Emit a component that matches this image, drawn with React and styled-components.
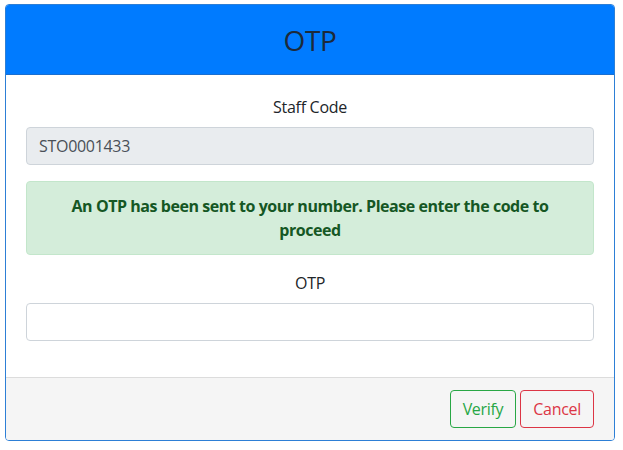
import React from 'react';
import styled, { createGlobalStyle } from 'styled-components';

const GlobalStyle = createGlobalStyle`
  body {
    margin: 0;
    background: #ffffff;
    font-family: "Segoe UI", "Open Sans", "Noto Sans", sans-serif;
    letter-spacing: -0.3px;
    color: #212529;
  }
`;

const Page = styled.div`
  padding: 4px 0 0 5px;
`;

const Card = styled.div`
  width: 610px;
  box-sizing: border-box;
  border: 1px solid #2d7fd6;
  border-radius: 4px;
  overflow: hidden;
  background: #ffffff;
`;

const Header = styled.div`
  height: 70px;
  background-color: #007bff;
  border-bottom: 1px solid #1a6fd0;
  display: flex;
  align-items: center;
  justify-content: center;
  box-sizing: border-box;
`;

const Title = styled.h3`
  margin: 0;
  font-size: 28px;
  font-weight: 400;
  color: #1d2a3a;
`;

const Body = styled.div`
  padding: 20px;
`;

const FormGroup = styled.div`
  margin-bottom: 16px;
`;

const Label = styled.label`
  display: block;
  text-align: center;
  font-size: 16px;
  line-height: 24px;
  margin-bottom: 8px;
  color: #212529;
`;

const Input = styled.input`
  display: block;
  width: 100%;
  height: 38px;
  box-sizing: border-box;
  padding: 6px 12px;
  font-family: inherit;
  letter-spacing: inherit;
  font-size: 16px;
  color: #495057;
  background-color: ${(p) => (p.readOnly ? '#e9ecef' : '#ffffff')};
  border: 1px solid #ced4da;
  border-radius: 4px;
  outline: none;
`;

const Alert = styled.div`
  padding: 12px 20px;
  margin-bottom: 16px;
  background-color: #d4edda;
  border: 1px solid #c3e6cb;
  border-radius: 4px;
  color: #155724;
  font-weight: 700;
  font-size: 16px;
  line-height: 24px;
  letter-spacing: -0.45px;
  text-align: center;
`;

const Footer = styled.div`
  display: flex;
  justify-content: flex-end;
  gap: 4px;
  padding: 12px 20px;
  background-color: #f5f5f5;
  border-top: 1px solid #dcdcdc;
`;

const Button = styled.button`
  height: 38px;
  padding: 0 12px;
  font-family: inherit;
  letter-spacing: inherit;
  font-size: 16px;
  background: transparent;
  border: 1px solid ${(p) => p.color};
  color: ${(p) => p.color};
  border-radius: 4px;
  cursor: pointer;
`;

export default function App() {
  return (
    <>
      <GlobalStyle />
      <Page>
        <Card>
          <Header>
            <Title>OTP</Title>
          </Header>
          <Body>
            <FormGroup>
              <Label>Staff Code</Label>
              <Input readOnly value="STO0001433" />
            </FormGroup>
            <Alert>An OTP has been sent to your number. Please enter the code to proceed</Alert>
            <FormGroup>
              <Label>OTP</Label>
              <Input />
            </FormGroup>
          </Body>
          <Footer>
            <Button color="#28a745">Verify</Button>
            <Button color="#dc3545">Cancel</Button>
          </Footer>
        </Card>
      </Page>
    </>
  );
}
